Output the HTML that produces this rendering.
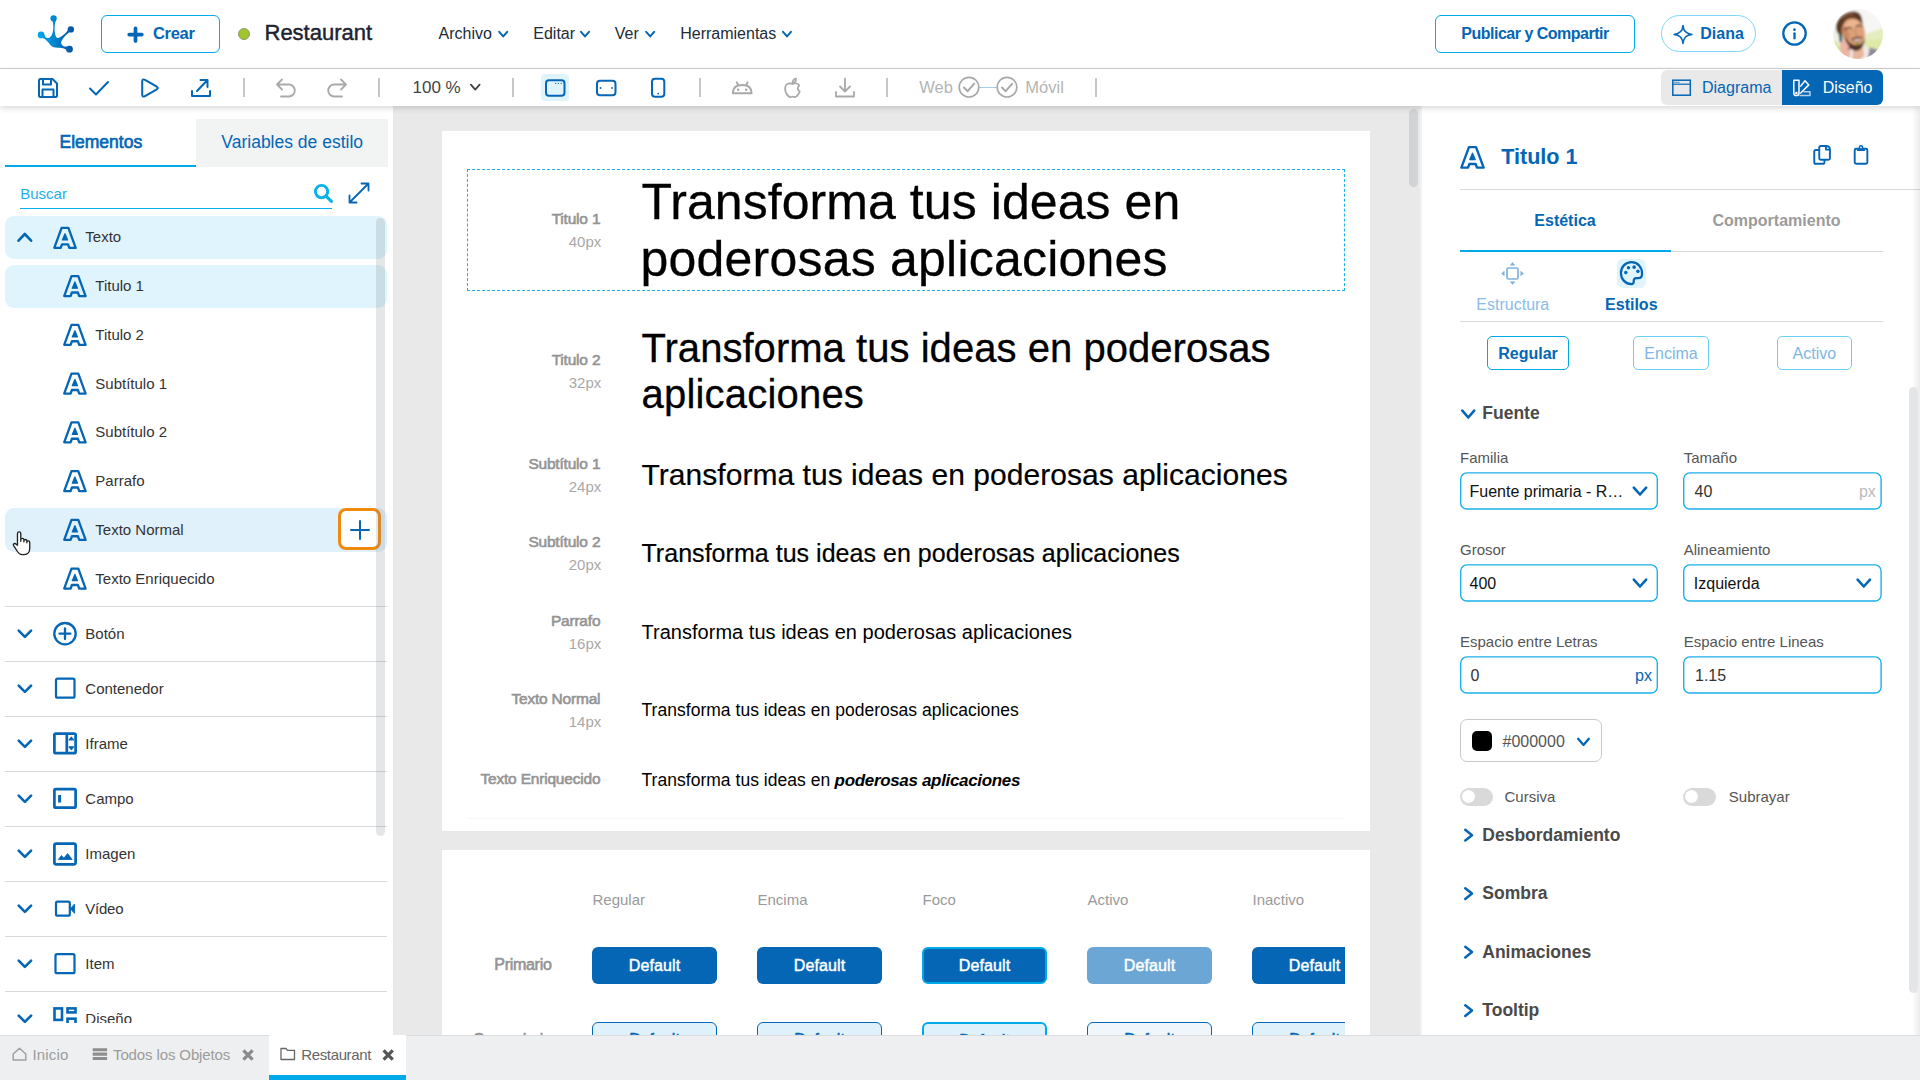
<!DOCTYPE html>
<html lang="es"><head><meta charset="utf-8"><title>Restaurant</title>
<style>
*{box-sizing:border-box;margin:0;padding:0}
html,body{width:1920px;height:1080px;overflow:hidden;background:#fff}
body{font-family:"Liberation Sans",sans-serif;color:#333;font-size:15px}
#app{position:relative;width:1920px;height:1080px;overflow:hidden}
.ab{position:absolute}
.t{white-space:nowrap;line-height:1}
.b{font-weight:700}
.blue{color:#0466b5}
svg{display:block;overflow:visible}
.m{-webkit-text-stroke:0.45px currentColor}

</style></head>
<body>
<div id="app">
<div class="ab " style="left:393px;top:106px;width:1029px;height:929px;background:#e9e9e9"></div>
<div class="ab " style="left:1420px;top:106px;width:2px;height:929px;background:#f1f2f2"></div>
<div class="ab " style="left:442px;top:131px;width:928px;height:699.5px;background:#fff"></div>
<div class="ab " style="left:467px;top:818px;width:878px;height:1px;background:#f8f8f8"></div>
<div class="ab " style="left:467px;top:169px;width:878px;height:121.5px;border:1px dashed #1fb0ea"></div>
<div class="ab t m" style="right:1319.7px;top:211px;font-size:15.5px;color:#949494;-webkit-text-stroke-width:.6px;letter-spacing:-.2px">Titulo 1</div>
<div class="ab t " style="right:1318.7px;top:234px;font-size:15px;color:#a8a8a8">40px</div>
<div class="ab t m" style="right:1319.7px;top:352px;font-size:15.5px;color:#949494;-webkit-text-stroke-width:.6px;letter-spacing:-.2px">Titulo 2</div>
<div class="ab t " style="right:1318.7px;top:375px;font-size:15px;color:#a8a8a8">32px</div>
<div class="ab t m" style="right:1319.7px;top:456px;font-size:15.5px;color:#949494;-webkit-text-stroke-width:.6px;letter-spacing:-.2px">Subtítulo 1</div>
<div class="ab t " style="right:1318.7px;top:479px;font-size:15px;color:#a8a8a8">24px</div>
<div class="ab t m" style="right:1319.7px;top:534px;font-size:15.5px;color:#949494;-webkit-text-stroke-width:.6px;letter-spacing:-.2px">Subtítulo 2</div>
<div class="ab t " style="right:1318.7px;top:557px;font-size:15px;color:#a8a8a8">20px</div>
<div class="ab t m" style="right:1319.7px;top:613px;font-size:15.5px;color:#949494;-webkit-text-stroke-width:.6px;letter-spacing:-.2px">Parrafo</div>
<div class="ab t " style="right:1318.7px;top:636px;font-size:15px;color:#a8a8a8">16px</div>
<div class="ab t m" style="right:1319.7px;top:691px;font-size:15.5px;color:#949494;-webkit-text-stroke-width:.6px;letter-spacing:-.2px">Texto Normal</div>
<div class="ab t " style="right:1318.7px;top:714px;font-size:15px;color:#a8a8a8">14px</div>
<div class="ab t m" style="right:1319.7px;top:771px;font-size:15.5px;color:#949494;-webkit-text-stroke-width:.6px;letter-spacing:-.2px">Texto Enriquecido</div>
<div class="ab t " style="left:641.5px;top:177px;font-size:50px;color:#000;letter-spacing:0.065px;-webkit-text-stroke:0.3px #000">Transforma tus ideas en</div>
<div class="ab t " style="left:640.5px;top:234px;font-size:50px;color:#000;letter-spacing:.215px;-webkit-text-stroke:.3px #000">poderosas aplicaciones</div>
<div class="ab t " style="left:641.5px;top:328px;font-size:40px;color:#000;letter-spacing:0.04px;-webkit-text-stroke:0.3px #000">Transforma tus ideas en poderosas</div>
<div class="ab t " style="left:641.5px;top:374px;font-size:40px;color:#000;letter-spacing:0.2px;-webkit-text-stroke:0.3px #000">aplicaciones</div>
<div class="ab t " style="left:641.5px;top:460px;font-size:30px;color:#000;letter-spacing:0.045px;-webkit-text-stroke:0.2px #000">Transforma tus ideas en poderosas aplicaciones</div>
<div class="ab t " style="left:641.5px;top:541px;font-size:25px;color:#000;letter-spacing:0.03px;-webkit-text-stroke:0.2px #000">Transforma tus ideas en poderosas aplicaciones</div>
<div class="ab t " style="left:641.5px;top:622px;font-size:20px;color:#000;letter-spacing:0.024px">Transforma tus ideas en poderosas aplicaciones</div>
<div class="ab t " style="left:641.5px;top:702px;font-size:17.5px;color:#000;letter-spacing:0.03px">Transforma tus ideas en poderosas aplicaciones</div>
<div class="ab t " style="left:641.5px;top:772px;font-size:17.5px;color:#000;letter-spacing:0.03px">Transforma tus ideas en</div>
<div class="ab t " style="left:834.6px;top:772px;font-size:17px;color:#000;letter-spacing:-.33px"><b><i>poderosas aplicaciones</i></b></div>
<div class="ab" style="left:393px;top:840px;width:1027px;height:195px;overflow:hidden"><div class="ab" style="left:-393px;top:-840px;width:1920px;height:1080px"><div class="ab " style="left:442px;top:850px;width:928px;height:300px;background:#fff"></div>
<div class="ab t " style="left:592.5px;top:892px;font-size:15px;color:#9a9a9a">Regular</div>
<div class="ab t " style="left:757.5px;top:892px;font-size:15px;color:#9a9a9a">Encima</div>
<div class="ab t " style="left:922.5px;top:892px;font-size:15px;color:#9a9a9a">Foco</div>
<div class="ab t " style="left:1087.5px;top:892px;font-size:15px;color:#9a9a9a">Activo</div>
<div class="ab t " style="left:1252.5px;top:892px;font-size:15px;color:#9a9a9a">Inactivo</div>
<div class="ab t m" style="right:1368.5px;top:957px;font-size:16px;color:#949494;-webkit-text-stroke-width:.6px;letter-spacing:-.3px">Primario</div>
<div class="ab t m" style="right:1368.5px;top:1032px;font-size:16px;color:#949494;-webkit-text-stroke-width:.6px;letter-spacing:-.3px">Secundario</div>
<div class="ab" style="left:467px;top:160px;width:878px;height:900px;overflow:hidden"><div class="ab " style="left:125px;top:787px;width:125px;height:37px;background:#0466b5;border-radius:6px;"><div class="t m" style="color:#fff;font-size:16px;text-align:center;line-height:37px;letter-spacing:.1px">Default</div></div>
<div class="ab " style="left:125px;top:862px;width:125px;height:37px;background:#dff1fb;border:1.500px solid #0466b5;border-radius:6px;"><div class="t m" style="color:#0466b5;font-size:16px;text-align:center;line-height:34px">Default</div></div>
<div class="ab " style="left:290px;top:787px;width:125px;height:37px;background:#0466b5;border-radius:6px;"><div class="t m" style="color:#fff;font-size:16px;text-align:center;line-height:37px;letter-spacing:.1px">Default</div></div>
<div class="ab " style="left:290px;top:862px;width:125px;height:37px;background:#dff1fb;border:1.500px solid #0466b5;border-radius:6px;"><div class="t m" style="color:#0466b5;font-size:16px;text-align:center;line-height:34px">Default</div></div>
<div class="ab " style="left:455px;top:787px;width:125px;height:37px;background:#0466b5;border-radius:6px;border:2px solid #00a9e8;"><div class="t m" style="color:#fff;font-size:16px;text-align:center;line-height:33px;letter-spacing:.1px">Default</div></div>
<div class="ab " style="left:455px;top:862px;width:125px;height:37px;background:#dff1fb;border:2px solid #00a9e8;border-radius:6px;"><div class="t m" style="color:#0466b5;font-size:16px;text-align:center;line-height:33px">Default</div></div>
<div class="ab " style="left:620px;top:787px;width:125px;height:37px;background:#6ba6d4;border-radius:6px;"><div class="t m" style="color:#fff;font-size:16px;text-align:center;line-height:37px;letter-spacing:.1px">Default</div></div>
<div class="ab " style="left:620px;top:862px;width:125px;height:37px;background:#eff7fc;border:1.500px solid #0466b5;border-radius:6px;"><div class="t m" style="color:#0466b5;font-size:16px;text-align:center;line-height:34px">Default</div></div>
<div class="ab " style="left:785px;top:787px;width:125px;height:37px;background:#0466b5;border-radius:6px;"><div class="t m" style="color:#fff;font-size:16px;text-align:center;line-height:37px;letter-spacing:.1px">Default</div></div>
<div class="ab " style="left:785px;top:862px;width:125px;height:37px;background:#dff1fb;border:1.500px solid #0466b5;border-radius:6px;"><div class="t m" style="color:#0466b5;font-size:16px;text-align:center;line-height:34px">Default</div></div></div></div></div>
<div class="ab " style="left:1409px;top:108.5px;width:9.3px;height:78px;background:#d2d3d5;border-radius:5px"></div>
<div class="ab " style="left:0px;top:106px;width:393px;height:929px;background:#fff"></div>
<div class="ab " style="left:196px;top:119px;width:192px;height:48px;background:#f2f4f4"></div>
<div class="ab " style="left:5px;top:164.5px;width:191px;height:2.5px;background:#00a9e8"></div>
<div class="ab t m blue" style="left:100.8px;transform:translateX(-50%);top:134px;font-size:17.5px;-webkit-text-stroke-width:.65px">Elementos</div>
<div class="ab t blue" style="left:292.2px;transform:translateX(-50%);top:134px;font-size:17.5px;">Variables de estilo</div>
<div class="ab t " style="left:20.2px;top:186px;font-size:15px;color:#1fb0ea">Buscar</div>
<div class="ab " style="left:20px;top:207.9px;width:312px;height:1.1px;background:#08b0ec"></div>
<svg class="ab" style="left:314px;top:184px;" width="21" height="21" viewBox="0.0000 0.0000 21.0000 21.0000"  preserveAspectRatio="none"><circle cx="7.550" cy="7.550" r="6.150" fill="none" stroke="#08b0ec" stroke-width="2.900"/><path d="M12.300 12.300 L17.400 17.400" stroke="#08b0ec" stroke-width="3.100" stroke-linecap="round"/></svg>
<svg class="ab" style="left:348px;top:182px;" width="23" height="23" viewBox="0.0000 0.0000 23.0000 23.0000"  preserveAspectRatio="none"><path d="M2 20 L20 2 M13.500 1.500 H20.500 V8.500 M1.500 13.500 V20.500 H8.500" fill="none" stroke="#0466b5" stroke-width="1.800" stroke-linecap="round" stroke-linejoin="round"/></svg>
<div class="ab " style="left:5px;top:216px;width:382px;height:43px;background:#dff4fc;border-radius:9px"></div>
<svg class="ab" style="left:17px;top:232px;" width="17" height="11" viewBox="-0.2000 -0.7000 17.0000 11.0000"  preserveAspectRatio="none"><path d="M1.3 8 L7.6 1.3 L13.899999999999999 8" fill="none" stroke="#0466b5" stroke-width="2.6" stroke-linecap="round" stroke-linejoin="round"/></svg>
<svg class="ab" style="left:53px;top:226px;" width="25" height="24" viewBox="0.0000 -0.7000 25.0000 24.0000"  preserveAspectRatio="none"><path d="M8.600 1.150 H15.400 L22.700 21.150 H16.300 L15 17.600 H9 L7.700 21.150 H1.300 Z" fill="none" stroke="#0466b5" stroke-width="2.300" stroke-linejoin="round"/><path d="M12 7 L14.600 13.300 H9.400 Z" fill="#0466b5" stroke="#0466b5" stroke-width="1.200" stroke-linejoin="round"/></svg>
<div class="ab t " style="left:85.3px;top:229px;font-size:15px;color:#333">Texto</div>
<div class="ab " style="left:5px;top:264.5px;width:382px;height:43.5px;background:#dff4fc;border-radius:9px"></div>
<svg class="ab" style="left:62px;top:274px;" width="26" height="25" viewBox="-0.9000 -0.9000 26.0000 25.0000"  preserveAspectRatio="none"><path d="M8.600 1.150 H15.400 L22.700 21.150 H16.300 L15 17.600 H9 L7.700 21.150 H1.300 Z" fill="none" stroke="#0466b5" stroke-width="2.300" stroke-linejoin="round"/><path d="M12 7 L14.600 13.300 H9.400 Z" fill="#0466b5" stroke="#0466b5" stroke-width="1.200" stroke-linejoin="round"/></svg>
<div class="ab t " style="left:95.3px;top:278px;font-size:15px;color:#333">Titulo 1</div>
<svg class="ab" style="left:62px;top:323px;" width="26" height="24" viewBox="-0.9000 -0.6500 26.0000 24.0000"  preserveAspectRatio="none"><path d="M8.600 1.150 H15.400 L22.700 21.150 H16.300 L15 17.600 H9 L7.700 21.150 H1.300 Z" fill="none" stroke="#0466b5" stroke-width="2.300" stroke-linejoin="round"/><path d="M12 7 L14.600 13.300 H9.400 Z" fill="#0466b5" stroke="#0466b5" stroke-width="1.200" stroke-linejoin="round"/></svg>
<div class="ab t " style="left:95.3px;top:327px;font-size:15px;color:#333">Titulo 2</div>
<svg class="ab" style="left:62px;top:372px;" width="26" height="24" viewBox="-0.9000 -0.4000 26.0000 24.0000"  preserveAspectRatio="none"><path d="M8.600 1.150 H15.400 L22.700 21.150 H16.300 L15 17.600 H9 L7.700 21.150 H1.300 Z" fill="none" stroke="#0466b5" stroke-width="2.300" stroke-linejoin="round"/><path d="M12 7 L14.600 13.300 H9.400 Z" fill="#0466b5" stroke="#0466b5" stroke-width="1.200" stroke-linejoin="round"/></svg>
<div class="ab t " style="left:95.3px;top:376px;font-size:15px;color:#333">Subtítulo 1</div>
<svg class="ab" style="left:62px;top:421px;" width="26" height="24" viewBox="-0.9000 -0.1500 26.0000 24.0000"  preserveAspectRatio="none"><path d="M8.600 1.150 H15.400 L22.700 21.150 H16.300 L15 17.600 H9 L7.700 21.150 H1.300 Z" fill="none" stroke="#0466b5" stroke-width="2.300" stroke-linejoin="round"/><path d="M12 7 L14.600 13.300 H9.400 Z" fill="#0466b5" stroke="#0466b5" stroke-width="1.200" stroke-linejoin="round"/></svg>
<div class="ab t " style="left:95.3px;top:424px;font-size:15px;color:#333">Subtítulo 2</div>
<svg class="ab" style="left:62px;top:469px;" width="26" height="25" viewBox="-0.9000 -0.9000 26.0000 25.0000"  preserveAspectRatio="none"><path d="M8.600 1.150 H15.400 L22.700 21.150 H16.300 L15 17.600 H9 L7.700 21.150 H1.300 Z" fill="none" stroke="#0466b5" stroke-width="2.300" stroke-linejoin="round"/><path d="M12 7 L14.600 13.300 H9.400 Z" fill="#0466b5" stroke="#0466b5" stroke-width="1.200" stroke-linejoin="round"/></svg>
<div class="ab t " style="left:95.3px;top:473px;font-size:15px;color:#333">Parrafo</div>
<div class="ab " style="left:5px;top:508px;width:382px;height:44px;background:#e0f1fb;border-radius:9px"></div>
<svg class="ab" style="left:62px;top:518px;" width="26" height="24" viewBox="-0.9000 -0.6500 26.0000 24.0000"  preserveAspectRatio="none"><path d="M8.600 1.150 H15.400 L22.700 21.150 H16.300 L15 17.600 H9 L7.700 21.150 H1.300 Z" fill="none" stroke="#0466b5" stroke-width="2.300" stroke-linejoin="round"/><path d="M12 7 L14.600 13.300 H9.400 Z" fill="#0466b5" stroke="#0466b5" stroke-width="1.200" stroke-linejoin="round"/></svg>
<div class="ab t " style="left:95.3px;top:522px;font-size:15px;color:#333">Texto Normal</div>
<svg class="ab" style="left:62px;top:567px;" width="26" height="24" viewBox="-0.9000 -0.4000 26.0000 24.0000"  preserveAspectRatio="none"><path d="M8.600 1.150 H15.400 L22.700 21.150 H16.300 L15 17.600 H9 L7.700 21.150 H1.300 Z" fill="none" stroke="#0466b5" stroke-width="2.300" stroke-linejoin="round"/><path d="M12 7 L14.600 13.300 H9.400 Z" fill="#0466b5" stroke="#0466b5" stroke-width="1.200" stroke-linejoin="round"/></svg>
<div class="ab t " style="left:95.3px;top:571px;font-size:15px;color:#333">Texto Enriquecido</div>
<div class="ab " style="left:338.3px;top:508.3px;width:43px;height:41.4px;border:3.500px solid #f08a0c;border-radius:8px;background:#fff"></div>
<svg class="ab" style="left:350px;top:520px;" width="21" height="21" viewBox="0.0000 0.0000 21.0000 21.0000"  preserveAspectRatio="none"><path d="M10 1 V19 M1 10 H19" stroke="#0466b5" stroke-width="2" stroke-linecap="round"/></svg>
<div class="ab " style="left:5px;top:606px;width:382px;height:1px;background:#d9d9d9"></div>
<div class="ab" style="left:0;top:607px;width:393px;height:416px;overflow:hidden"><div class="ab" style="left:0;top:-607px;width:1920px;height:1080px"><svg class="ab" style="left:17px;top:629px;" width="17" height="10" viewBox="-0.4000 -0.3000 17.0000 10.0000"  preserveAspectRatio="none"><path d="M1.3 1.3 L7.5 7.6 L13.7 1.3" fill="none" stroke="#0466b5" stroke-width="2.6" stroke-linecap="round" stroke-linejoin="round"/></svg>
<svg class="ab" style="left:53px;top:621px;" width="25" height="26" viewBox="0.0000 -0.7000 25.0000 26.0000"  preserveAspectRatio="none"><circle cx="12" cy="12" r="10.700" fill="none" stroke="#0466b5" stroke-width="2.300"/><path d="M12 6.600 V17.400 M6.600 12 H17.400" fill="none" stroke="#0466b5" stroke-width="2.300" stroke-linecap="round"/></svg>
<div class="ab t " style="left:85.3px;top:626px;font-size:15px;color:#333">Botón</div>
<div class="ab " style="left:5px;top:661px;width:382px;height:1px;background:#d9d9d9"></div>
<svg class="ab" style="left:17px;top:684px;" width="17" height="10" viewBox="-0.4000 -0.3000 17.0000 10.0000"  preserveAspectRatio="none"><path d="M1.3 1.3 L7.5 7.6 L13.7 1.3" fill="none" stroke="#0466b5" stroke-width="2.6" stroke-linecap="round" stroke-linejoin="round"/></svg>
<svg class="ab" style="left:53px;top:676px;" width="25" height="26" viewBox="0.0000 -0.7000 25.0000 26.0000"  preserveAspectRatio="none"><rect x="3" y="2" width="18.500" height="19" rx="1.500" fill="none" stroke="#0466b5" stroke-width="2.200"/></svg>
<div class="ab t " style="left:85.3px;top:681px;font-size:15px;color:#333">Contenedor</div>
<div class="ab " style="left:5px;top:716px;width:382px;height:1px;background:#d9d9d9"></div>
<svg class="ab" style="left:17px;top:739px;" width="17" height="10" viewBox="-0.4000 -0.3000 17.0000 10.0000"  preserveAspectRatio="none"><path d="M1.3 1.3 L7.5 7.6 L13.7 1.3" fill="none" stroke="#0466b5" stroke-width="2.6" stroke-linecap="round" stroke-linejoin="round"/></svg>
<svg class="ab" style="left:53px;top:731px;" width="25" height="26" viewBox="0.0000 -0.7000 25.0000 26.0000"  preserveAspectRatio="none"><rect x="1.400" y="1.900" width="21.200" height="19.600" rx="1.500" fill="none" stroke="#0466b5" stroke-width="2.700"/><path d="M13.800 2 V21.500" fill="none" stroke="#0466b5" stroke-width="2.700"/><path d="M16 8.300 L18.300 5.500 L20.600 8.300Z M16 15.100 L18.300 17.900 L20.600 15.100Z" fill="#0466b5" stroke="#0466b5" stroke-width="1.100" stroke-linejoin="round"/></svg>
<div class="ab t " style="left:85.3px;top:736px;font-size:15px;color:#333">Iframe</div>
<div class="ab " style="left:5px;top:771px;width:382px;height:1px;background:#d9d9d9"></div>
<svg class="ab" style="left:17px;top:794px;" width="17" height="10" viewBox="-0.4000 -0.3000 17.0000 10.0000"  preserveAspectRatio="none"><path d="M1.3 1.3 L7.5 7.6 L13.7 1.3" fill="none" stroke="#0466b5" stroke-width="2.6" stroke-linecap="round" stroke-linejoin="round"/></svg>
<svg class="ab" style="left:53px;top:786px;" width="25" height="26" viewBox="0.0000 -0.7000 25.0000 26.0000"  preserveAspectRatio="none"><rect x="1.400" y="2.400" width="21.200" height="18.600" rx="1.500" fill="none" stroke="#0466b5" stroke-width="2.700"/><path d="M6.600 8.300 V15.800" fill="none" stroke="#0466b5" stroke-width="3" stroke-linecap="butt"/></svg>
<div class="ab t " style="left:85.3px;top:791px;font-size:15px;color:#333">Campo</div>
<div class="ab " style="left:5px;top:826px;width:382px;height:1px;background:#d9d9d9"></div>
<svg class="ab" style="left:17px;top:849px;" width="17" height="10" viewBox="-0.4000 -0.3000 17.0000 10.0000"  preserveAspectRatio="none"><path d="M1.3 1.3 L7.5 7.6 L13.7 1.3" fill="none" stroke="#0466b5" stroke-width="2.6" stroke-linecap="round" stroke-linejoin="round"/></svg>
<svg class="ab" style="left:53px;top:842px;" width="25" height="26" viewBox="0.0000 -0.2000 25.0000 26.0000"  preserveAspectRatio="none"><rect x="1.400" y="1.400" width="21.200" height="20.800" rx="1.800" fill="none" stroke="#0466b5" stroke-width="2.700"/><path d="M5.300 17.300 L8.500 13.300 L10.800 16 L14.600 11.400 L19.200 17.300Z" fill="#0466b5" stroke="#0466b5" stroke-width=".8" stroke-linejoin="round"/></svg>
<div class="ab t " style="left:85.3px;top:846px;font-size:15px;color:#333">Imagen</div>
<div class="ab " style="left:5px;top:881px;width:382px;height:1px;background:#d9d9d9"></div>
<svg class="ab" style="left:17px;top:904px;" width="17" height="10" viewBox="-0.4000 -0.3000 17.0000 10.0000"  preserveAspectRatio="none"><path d="M1.3 1.3 L7.5 7.6 L13.7 1.3" fill="none" stroke="#0466b5" stroke-width="2.6" stroke-linecap="round" stroke-linejoin="round"/></svg>
<svg class="ab" style="left:53px;top:896px;" width="25" height="26" viewBox="0.0000 -0.7000 25.0000 26.0000"  preserveAspectRatio="none"><rect x="3" y="5" width="13.800" height="14" rx="1.500" fill="none" stroke="#0466b5" stroke-width="2.200"/><path d="M17.300 12 L21.600 7.300 V16.700Z" fill="#0466b5" stroke="#0466b5" stroke-width=".8" stroke-linejoin="round"/></svg>
<div class="ab t " style="left:85.3px;top:901px;font-size:15px;color:#333;letter-spacing:-.25px">Vídeo</div>
<div class="ab " style="left:5px;top:936px;width:382px;height:1px;background:#d9d9d9"></div>
<svg class="ab" style="left:17px;top:959px;" width="17" height="10" viewBox="-0.4000 -0.3000 17.0000 10.0000"  preserveAspectRatio="none"><path d="M1.3 1.3 L7.5 7.6 L13.7 1.3" fill="none" stroke="#0466b5" stroke-width="2.6" stroke-linecap="round" stroke-linejoin="round"/></svg>
<svg class="ab" style="left:53px;top:951px;" width="25" height="26" viewBox="0.0000 -0.7000 25.0000 26.0000"  preserveAspectRatio="none"><rect x="2.500" y="2.500" width="19" height="19" rx="1.500" fill="none" stroke="#0466b5" stroke-width="2.200"/></svg>
<div class="ab t " style="left:85.3px;top:956px;font-size:15px;color:#333">Item</div>
<div class="ab " style="left:5px;top:991px;width:382px;height:1px;background:#d9d9d9"></div>
<svg class="ab" style="left:17px;top:1014px;" width="17" height="10" viewBox="-0.4000 -0.3000 17.0000 10.0000"  preserveAspectRatio="none"><path d="M1.3 1.3 L7.5 7.6 L13.7 1.3" fill="none" stroke="#0466b5" stroke-width="2.6" stroke-linecap="round" stroke-linejoin="round"/></svg>
<svg class="ab" style="left:53px;top:1006px;" width="25" height="26" viewBox="0.0000 -0.7000 25.0000 26.0000"  preserveAspectRatio="none"><rect x="1.500" y="1.700" width="7.500" height="11.500" fill="none" stroke="#0466b5" stroke-width="2.600" stroke-linejoin="miter"/><rect x="14.500" y="1.700" width="8" height="4" fill="none" stroke="#0466b5" stroke-width="2.600" stroke-linejoin="miter"/><rect x="14.500" y="12" width="8" height="9" fill="none" stroke="#0466b5" stroke-width="2.600" stroke-linejoin="miter"/><rect x="1.500" y="19" width="7.500" height="4" fill="none" stroke="#0466b5" stroke-width="2.600" stroke-linejoin="miter"/></svg>
<div class="ab t " style="left:85.3px;top:1011px;font-size:15px;color:#333">Diseño</div></div></div>
<div class="ab " style="left:376.3px;top:218px;width:8.7px;height:618px;background:rgba(120,128,140,.2);border-radius:5px"></div>
<svg class="ab" style="left:11px;top:530px;" width="23" height="28" viewBox="-0.3619 -0.2717 20.8095 25.3585"  preserveAspectRatio="none"><path d="M5.500 13.500 V3 Q5.500 1.500 7 1.500 Q8.500 1.500 8.500 3 V10 V8.500 Q8.500 7.300 10 7.300 Q11.300 7.300 11.300 8.800 V10.500 V9.500 Q11.300 8.300 12.700 8.300 Q14 8.300 14 9.800 V11.300 V10.600 Q14 9.500 15.300 9.500 Q16.600 9.500 16.600 11 V16 Q16.600 22 11.500 22 H10 Q7 22 5 18.500 L2 13.800 Q1.300 12.500 2.500 12 Q3.600 11.700 4.500 12.800Z" fill="#fff" stroke="#222" stroke-width="1.200" stroke-linejoin="round"/></svg>
<div class="ab " style="left:1422px;top:106px;width:498px;height:929px;background:#fff"></div>
<svg class="ab" style="left:1460px;top:146px;" width="26" height="24" viewBox="0.0000 0.0000 24.9600 23.4737"  preserveAspectRatio="none"><path d="M8.600 1.150 H15.400 L22.700 21.150 H16.300 L15 17.600 H9 L7.700 21.150 H1.300 Z" fill="none" stroke="#0466b5" stroke-width="2.300" stroke-linejoin="round"/><path d="M12 7 L14.600 13.300 H9.400 Z" fill="#0466b5" stroke="#0466b5" stroke-width="1.200" stroke-linejoin="round"/></svg>
<div class="ab t b blue" style="left:1501.2px;top:146px;font-size:21.6px;">Titulo 1</div>
<svg class="ab" style="left:1812px;top:145px;" width="21" height="21" viewBox="0.0000 0.0000 21.0000 21.0000"  preserveAspectRatio="none"><rect x="2.250" y="4.950" width="10.200" height="13.800" rx="1.600" fill="none" stroke="#0466b5" stroke-width="1.900" stroke-linejoin="round" stroke-linecap="round"/><path d="M8.750 1 H14.300 Q17.900 1 17.900 4.600 V13.300 Q17.900 14.800 16.400 14.800 H8.750 Q7.250 14.800 7.250 13.300 V2.500 Q7.250 1 8.750 1Z" fill="#fff" stroke="#0466b5" stroke-width="1.900" stroke-linejoin="round"/><path d="M13.900 1.200 V4.600 H17.700" fill="none" stroke="#0466b5" stroke-width="1.900" stroke-linejoin="round" stroke-linecap="round"/></svg>
<svg class="ab" style="left:1852px;top:145px;" width="19" height="21" viewBox="0.0000 0.0000 19.0000 21.0000"  preserveAspectRatio="none"><rect x="2.700" y="3.750" width="12.650" height="15" rx="1.400" fill="none" stroke="#0466b5" stroke-width="1.900" stroke-linejoin="round" stroke-linecap="round"/><circle cx="9" cy="2.400" r="1.600" fill="#fff" stroke="#0466b5" stroke-width="1.500"/><path d="M5.600 5.100 H12.400" stroke="#0466b5" stroke-width="1.700" stroke-linecap="round"/></svg>
<div class="ab " style="left:1460px;top:189px;width:460px;height:1px;background:#d9d9d9"></div>
<div class="ab t b blue" style="left:1565px;transform:translateX(-50%);top:213px;font-size:16px;">Estética</div>
<div class="ab t b" style="left:1776.5px;transform:translateX(-50%);top:213px;font-size:16px;color:#9b9b9b">Comportamiento</div>
<div class="ab " style="left:1671px;top:251px;width:212px;height:1px;background:#d9d9d9"></div>
<div class="ab " style="left:1460px;top:249.5px;width:211px;height:2.6px;background:#00a9e8"></div>
<svg class="ab" style="left:1500px;top:261px;" width="26" height="26" viewBox="0.0000 0.0000 26.0000 26.0000"  preserveAspectRatio="none"><rect x="7" y="7" width="11" height="11" rx="1.500" fill="none" stroke="#7fb2e0" stroke-width="1.700"/><path d="M10.300 4.200 L12.500 1.500 L14.700 4.200Z M10.300 20.800 L12.500 23.500 L14.700 20.800Z M4.200 10.300 L1.500 12.500 L4.200 14.700Z M20.800 10.300 L23.500 12.500 L20.800 14.700Z" fill="#7fb2e0" stroke="#7fb2e0" stroke-width=".6" stroke-linejoin="round"/></svg>
<div class="ab t " style="left:1512.8px;transform:translateX(-50%);top:297px;font-size:16px;color:#8cbce6">Estructura</div>
<div class="ab " style="left:1617px;top:259.2px;width:29px;height:28.5px;background:#dff4fc;border-radius:6px"></div>
<svg class="ab" style="left:1619px;top:260px;" width="26" height="27" viewBox="-0.2951 -0.4743 25.5738 25.6126" preserveAspectRatio="none"><path d="M12 1.600 C5.800 1.600 1.600 6.200 1.600 11.800 C1.600 17.800 6.200 22.400 11.800 22.400 C13.600 22.400 14.400 21.200 14.200 19.900 C13.900 18.300 14.800 16.800 16.600 16.800 H18.600 C20.900 16.800 22.400 15.200 22.400 12.600 C22.400 6.400 18.200 1.600 12 1.600Z" fill="none" stroke="#0466b5" stroke-width="2.200"/><circle cx="6.400" cy="11.500" r="1.700" fill="#0466b5"/><circle cx="9" cy="6.800" r="1.700" fill="#0466b5"/><circle cx="14.600" cy="6.300" r="1.700" fill="#0466b5"/><circle cx="18.300" cy="10.300" r="1.700" fill="#0466b5"/></svg>
<div class="ab t b blue" style="left:1631.3px;transform:translateX(-50%);top:297px;font-size:16px;">Estilos</div>
<div class="ab " style="left:1460px;top:321px;width:423px;height:1px;background:#d9d9d9"></div>
<div class="ab " style="left:1487px;top:336.2px;width:82px;height:34px;border:1.300px solid #00a9e8;border-radius:5px"></div>
<div class="ab t b blue" style="left:1528px;transform:translateX(-50%);top:346px;font-size:16px;">Regular</div>
<div class="ab " style="left:1633px;top:336.2px;width:76px;height:34px;border:1.300px solid #6ccef4;border-radius:5px"></div>
<div class="ab t " style="left:1671px;transform:translateX(-50%);top:346px;font-size:16px;color:#7fb6e2">Encima</div>
<div class="ab " style="left:1777px;top:336.2px;width:75px;height:34px;border:1.300px solid #6ccef4;border-radius:5px"></div>
<div class="ab t " style="left:1814.3px;transform:translateX(-50%);top:346px;font-size:16px;color:#7fb6e2">Activo</div>
<svg class="ab" style="left:1461px;top:409px;" width="16" height="11" viewBox="0.0000 -0.3000 16.0000 11.0000"  preserveAspectRatio="none"><path d="M1.3 1.3 L7.25 8.2 L13.2 1.3" fill="none" stroke="#0466b5" stroke-width="2.6" stroke-linecap="round" stroke-linejoin="round"/></svg>
<div class="ab t b" style="left:1482.3px;top:405px;font-size:17.5px;color:#4a4a4a">Fuente</div>
<div class="ab t " style="left:1460px;top:450px;font-size:15px;color:#555">Familia</div>
<div class="ab t " style="left:1683.7px;top:450px;font-size:15px;color:#555">Tamaño</div>
<svg class="ab" style="left:1460px;top:472px;" width="199" height="40" viewBox="0.0000 -0.5000 199.0000 40.0000"  preserveAspectRatio="none"><rect x=".7" y=".4" width="196.6" height="36.100" rx="6" fill="#fff" stroke="#1db0ea" stroke-width="1.400"/></svg>
<div class="ab t " style="left:1469.5px;top:484px;font-size:16px;color:#111">Fuente primaria - R…</div>
<svg class="ab" style="left:1632px;top:486px;" width="17" height="11" viewBox="-0.5000 -0.3000 17.0000 11.0000"  preserveAspectRatio="none"><path d="M1.3 1.3 L7.5 8.2 L13.7 1.3" fill="none" stroke="#0466b5" stroke-width="2.6" stroke-linecap="round" stroke-linejoin="round"/></svg>
<svg class="ab" style="left:1683px;top:472px;" width="200" height="40" viewBox="0.0000 -0.5000 200.0000 40.0000"  preserveAspectRatio="none"><rect x=".7" y=".4" width="197.4" height="36.100" rx="6" fill="#fff" stroke="#1db0ea" stroke-width="1.400"/></svg>
<div class="ab t " style="left:1694.5px;top:484px;font-size:16px;color:#333">40</div>
<div class="ab t " style="right:44.200000000000045px;top:484px;font-size:16px;color:#bbb">px</div>
<div class="ab t " style="left:1460px;top:542px;font-size:15px;color:#555">Grosor</div>
<div class="ab t " style="left:1683.7px;top:542px;font-size:15px;color:#555">Alineamiento</div>
<svg class="ab" style="left:1460px;top:564px;" width="199" height="40" viewBox="0.0000 -0.5000 199.0000 40.0000"  preserveAspectRatio="none"><rect x=".7" y=".4" width="196.6" height="36.100" rx="6" fill="#fff" stroke="#1db0ea" stroke-width="1.400"/></svg>
<div class="ab t " style="left:1469.5px;top:576px;font-size:16px;color:#111">400</div>
<svg class="ab" style="left:1632px;top:578px;" width="17" height="11" viewBox="-0.5000 -0.3000 17.0000 11.0000"  preserveAspectRatio="none"><path d="M1.3 1.3 L7.5 8.2 L13.7 1.3" fill="none" stroke="#0466b5" stroke-width="2.6" stroke-linecap="round" stroke-linejoin="round"/></svg>
<svg class="ab" style="left:1683px;top:564px;" width="200" height="40" viewBox="0.0000 -0.5000 200.0000 40.0000"  preserveAspectRatio="none"><rect x=".7" y=".4" width="197.4" height="36.100" rx="6" fill="#fff" stroke="#1db0ea" stroke-width="1.400"/></svg>
<div class="ab t " style="left:1693.8px;top:576px;font-size:16px;color:#111">Izquierda</div>
<svg class="ab" style="left:1856px;top:578px;" width="17" height="11" viewBox="-0.3000 -0.3000 17.0000 11.0000"  preserveAspectRatio="none"><path d="M1.3 1.3 L7.5 8.2 L13.7 1.3" fill="none" stroke="#0466b5" stroke-width="2.6" stroke-linecap="round" stroke-linejoin="round"/></svg>
<div class="ab t " style="left:1460px;top:634px;font-size:15px;color:#555">Espacio entre Letras</div>
<div class="ab t " style="left:1683.7px;top:634px;font-size:15px;color:#555">Espacio entre Lineas</div>
<svg class="ab" style="left:1460px;top:656px;" width="199" height="40" viewBox="0.0000 -0.5000 199.0000 40.0000"  preserveAspectRatio="none"><rect x=".7" y=".4" width="196.6" height="36.100" rx="6" fill="#fff" stroke="#1db0ea" stroke-width="1.400"/></svg>
<div class="ab t " style="left:1470.5px;top:668px;font-size:16px;color:#333">0</div>
<div class="ab t " style="right:268px;top:668px;font-size:16px;color:#0466b5">px</div>
<svg class="ab" style="left:1683px;top:656px;" width="200" height="40" viewBox="0.0000 -0.5000 200.0000 40.0000"  preserveAspectRatio="none"><rect x=".7" y=".4" width="197.4" height="36.100" rx="6" fill="#fff" stroke="#1db0ea" stroke-width="1.400"/></svg>
<div class="ab t " style="left:1695px;top:668px;font-size:16px;color:#333">1.15</div>
<div class="ab " style="left:1460px;top:719.3px;width:142px;height:43.2px;border:1px solid #c9c9c9;border-radius:7px"></div>
<div class="ab " style="left:1472px;top:730.8px;width:20px;height:20px;background:#000;border-radius:5px"></div>
<div class="ab t " style="left:1502.5px;top:734px;font-size:16px;color:#555">#000000</div>
<svg class="ab" style="left:1577px;top:737px;" width="14" height="11" viewBox="0.0000 -0.6000 14.0000 11.0000"  preserveAspectRatio="none"><path d="M1.15 1.15 L6.5 7.4 L11.85 1.15" fill="none" stroke="#0466b5" stroke-width="2.3" stroke-linecap="round" stroke-linejoin="round"/></svg>
<div class="ab " style="left:1460px;top:788px;width:32.5px;height:17.8px;background:#d9d9d9;border-radius:9px"><div class="ab" style="left:2px;top:2.400px;width:13px;height:13px;border-radius:50%;background:#fff"></div></div>
<div class="ab t " style="left:1504.5px;top:789px;font-size:15px;color:#555">Cursiva</div>
<div class="ab " style="left:1683.3px;top:788px;width:32.5px;height:17.8px;background:#d9d9d9;border-radius:9px"><div class="ab" style="left:2px;top:2.400px;width:13px;height:13px;border-radius:50%;background:#fff"></div></div>
<div class="ab t " style="left:1728.8px;top:789px;font-size:15px;color:#555">Subrayar</div>
<svg class="ab" style="left:1464px;top:828px;" width="10" height="15" viewBox="0.0000 -0.6000 10.0000 15.0000"  preserveAspectRatio="none"><path d="M1.25 1.25 L8 6.6 L1.25 11.95" fill="none" stroke="#0466b5" stroke-width="2.5" stroke-linecap="round" stroke-linejoin="round"/></svg>
<div class="ab t b" style="left:1482.3px;top:827px;font-size:17.5px;color:#4a4a4a">Desbordamiento</div>
<svg class="ab" style="left:1464px;top:887px;" width="10" height="15" viewBox="0.0000 0.0000 10.0000 15.0000"  preserveAspectRatio="none"><path d="M1.25 1.25 L8 6.6 L1.25 11.95" fill="none" stroke="#0466b5" stroke-width="2.5" stroke-linecap="round" stroke-linejoin="round"/></svg>
<div class="ab t b" style="left:1482.3px;top:885px;font-size:17.5px;color:#4a4a4a">Sombra</div>
<svg class="ab" style="left:1464px;top:945px;" width="10" height="15" viewBox="0.0000 -0.5000 10.0000 15.0000"  preserveAspectRatio="none"><path d="M1.25 1.25 L8 6.6 L1.25 11.95" fill="none" stroke="#0466b5" stroke-width="2.5" stroke-linecap="round" stroke-linejoin="round"/></svg>
<div class="ab t b" style="left:1482.3px;top:944px;font-size:17.5px;color:#4a4a4a">Animaciones</div>
<svg class="ab" style="left:1464px;top:1004px;" width="10" height="15" viewBox="0.0000 0.0000 10.0000 15.0000"  preserveAspectRatio="none"><path d="M1.25 1.25 L8 6.6 L1.25 11.95" fill="none" stroke="#0466b5" stroke-width="2.5" stroke-linecap="round" stroke-linejoin="round"/></svg>
<div class="ab t b" style="left:1482.3px;top:1002px;font-size:17.5px;color:#4a4a4a">Tooltip</div>
<div class="ab " style="left:1912px;top:106px;width:8px;height:929px;background:linear-gradient(90deg,rgba(0,0,0,0),rgba(0,0,0,.075))"></div>
<div class="ab " style="left:1909px;top:386.5px;width:9px;height:606.5px;background:#e4e5e7;border-radius:5px"></div>
<div class="ab " style="left:0px;top:0px;width:1920px;height:68px;background:#fff;border-bottom:1px solid #cdd1d5;height:69px"></div>
<div class="ab " style="left:0px;top:69px;width:1920px;height:37px;background:#fff;box-shadow:0 2px 6px rgba(0,0,0,.16)"></div>
<svg class="ab" style="left:0px;top:0px;filter:blur(.3px)" width="101" height="69" viewBox="0.0000 0.0000 101.0000 69.0000"  preserveAspectRatio="none"><defs><linearGradient id="lg" x1="160" y1="0" x2="920" y2="0" gradientUnits="userSpaceOnUse"><stop offset="0" stop-color="#00aaec"/><stop offset="0.45" stop-color="#0086cf"/><stop offset="1" stop-color="#06509f"/></linearGradient></defs><g transform="translate(30 8) scale(0.048123)" fill="url(#lg)"><path d="M470 270 C486 330 490 400 480 470 C470 545 440 605 395 622 C345 638 305 600 288 535 L235 560 L262 625 C330 640 380 720 430 775 C470 820 520 828 600 826 C680 824 730 840 765 885 L820 855 L775 800 C740 812 660 790 646 730 C640 680 720 575 805 512 L848 445 L785 462 C770 500 700 560 640 600 C600 630 560 632 538 590 C516 540 506 450 514 380 C518 320 525 290 542 262 L490 215 Z"/><circle cx="490" cy="215" r="66"/><circle cx="848" cy="445" r="66"/><circle cx="230" cy="560" r="70"/><circle cx="820" cy="855" r="71"/></g></svg>
<div class="ab " style="left:101px;top:15px;width:119px;height:38px;border:1px solid #00a9e8;border-radius:6px;background:#fff"></div>
<svg class="ab" style="left:127px;top:26px;" width="18" height="18" viewBox="0.0000 0.0000 18.0000 18.0000"  preserveAspectRatio="none"><path d="M8.500 2.300 V14.900 M2.200 8.600 H14.800" stroke="#0466b5" stroke-width="3.700" stroke-linecap="round"/></svg>
<div class="ab t b blue" style="left:153px;top:25px;font-size:16.5px;letter-spacing:-.3px">Crear</div>
<div class="ab " style="left:238px;top:28px;width:12px;height:12px;border-radius:50%;background:#9fc52f;border:1px solid #8d9a6c"></div>
<div class="ab t m" style="left:264.5px;top:22px;font-size:22px;color:#1d2330">Restaurant</div>
<div class="ab t " style="left:438.5px;top:26px;font-size:16px;color:#222b38">Archivo</div>
<svg class="ab" style="left:498px;top:30px;" width="12" height="9" viewBox="-0.2000 -0.8000 12.0000 9.0000"  preserveAspectRatio="none"><path d="M1.0 1.0 L5.0 5.6 L9.0 1.0" fill="none" stroke="#0466b5" stroke-width="2" stroke-linecap="round" stroke-linejoin="round"/></svg>
<div class="ab t " style="left:533.3px;top:26px;font-size:16px;color:#222b38">Editar</div>
<svg class="ab" style="left:580px;top:30px;" width="11" height="9" viewBox="0.0000 -0.8000 11.0000 9.0000"  preserveAspectRatio="none"><path d="M1.0 1.0 L5.0 5.6 L9.0 1.0" fill="none" stroke="#0466b5" stroke-width="2" stroke-linecap="round" stroke-linejoin="round"/></svg>
<div class="ab t " style="left:614.8px;top:26px;font-size:16px;color:#222b38">Ver</div>
<svg class="ab" style="left:645px;top:30px;" width="12" height="9" viewBox="-0.2000 -0.8000 12.0000 9.0000"  preserveAspectRatio="none"><path d="M1.0 1.0 L5.0 5.6 L9.0 1.0" fill="none" stroke="#0466b5" stroke-width="2" stroke-linecap="round" stroke-linejoin="round"/></svg>
<div class="ab t " style="left:680.2px;top:26px;font-size:16px;color:#222b38">Herramientas</div>
<svg class="ab" style="left:782px;top:30px;" width="11" height="9" viewBox="0.0000 -0.8000 11.0000 9.0000"  preserveAspectRatio="none"><path d="M1.0 1.0 L5.0 5.6 L9.0 1.0" fill="none" stroke="#0466b5" stroke-width="2" stroke-linecap="round" stroke-linejoin="round"/></svg>
<div class="ab " style="left:1435px;top:15px;width:200px;height:38px;border:1px solid #00a9e8;border-radius:6px;background:#fff"></div>
<div class="ab t b blue" style="left:1535px;transform:translateX(-50%);top:26px;font-size:16px;letter-spacing:-.5px">Publicar y Compartir</div>
<div class="ab " style="left:1661px;top:15px;width:95px;height:37px;border:1px solid #7fd6f7;border-radius:19px;background:#fff"></div>
<svg class="ab" style="left:1673px;top:24px;" width="21" height="22" viewBox="0.0000 -0.4000 21.0000 22.0000"  preserveAspectRatio="none"><path d="M10 1 C10.400 7 13 9.600 19 10 C13 10.400 10.400 13 10 19 C9.600 13 7 10.400 1 10 C7 9.600 9.600 7 10 1Z" fill="none" stroke="#0466b5" stroke-width="1.500" stroke-linejoin="round"/></svg>
<div class="ab t b blue" style="left:1700.3px;top:26px;font-size:16px;">Diana</div>
<svg class="ab" style="left:1782px;top:21px;" width="26" height="26" viewBox="0.0000 0.0000 26.0000 26.0000"  preserveAspectRatio="none"><circle cx="12.500" cy="12.500" r="11.200" fill="none" stroke="#0466b5" stroke-width="2.300"/><circle cx="12.500" cy="8.700" r="1.350" fill="#0466b5"/><path d="M12.500 12.300 V17.400" stroke="#0466b5" stroke-width="2.300" stroke-linecap="round"/></svg>
<svg class="ab" style="left:1833px;top:9px;" width="51" height="51" viewBox="0.0000 0.0000 51.0000 51.0000"  preserveAspectRatio="none"><defs><clipPath id="avc"><circle cx="25" cy="25" r="25"/></clipPath><filter id="avb" x="-10%" y="-10%" width="120%" height="120%"><feGaussianBlur stdDeviation=".8"/></filter></defs><g clip-path="url(#avc)"><g filter="url(#avb)"><rect x="-3" y="-3" width="56" height="56" fill="#f6f6f5"/><path d="M30 26 C36 24 44 20 53 19 V44 H30Z" fill="#e4edbf"/><path d="M32 33 C38 30 46 30 53 28 V46 H32Z" fill="#dfeaa8"/><path d="M-3 28 C2 30 6 34 8 40 L12 53 H-3Z" fill="#d9e6a6"/><path d="M-3 20 L6 24 L6 32 L-3 32Z" fill="#eef2e4"/><path d="M33 42 L37 38.500 C41 39.500 44 40.500 47 42 L40 53 H31Z" fill="#8a8d99"/><path d="M17 44 L22 38 L31 36 L36.500 39.500 L34 53 H16Z" fill="#f1e9e8"/><path d="M20 42 L30 38 L31 47 L25 53 H19Z" fill="#e6b59c"/><path d="M3 19 C3 11 9 5 16 3 C22 1.500 27 3 28.500 8 L30 15 L22 12 L10 16 L9 27 C5.500 25.500 3 22.500 3 19Z" fill="#5b3a23"/><ellipse cx="20.500" cy="23.500" rx="11.300" ry="14.500" transform="rotate(-14 20.500 23.500)" fill="#dda17a"/><ellipse cx="12.500" cy="25" rx="3.500" ry="8" transform="rotate(-14 12.500 25)" fill="#c98a64"/><ellipse cx="19" cy="15.500" rx="7" ry="4.500" transform="rotate(-14 19 15.500)" fill="#eab690"/><path d="M11.500 28 C13 34 16 40.500 21.500 41.800 C27 42.500 31.500 38 32 28.500 C30 34 27.500 36.300 24 36.300 C19.500 36.300 15.500 33.500 11.500 28Z" fill="#4b3122"/><path d="M18 29.800 C21 27.800 26.500 27 29.500 27.800 C28.500 31.500 25 33.500 21.500 33 C19.500 32.500 18.500 31.500 18 29.800Z" fill="#7a4a36"/><path d="M19.800 30.300 C22.500 30.800 26 30.200 28.500 28.800 C27.500 31.500 24.500 32.600 22 32.200 C20.800 31.900 20.100 31.200 19.800 30.300Z" fill="#f3dcd6"/><ellipse cx="24.600" cy="35" rx="2.300" ry="1.300" fill="#8a8a3a"/><path d="M11.500 20.500 C13.500 18.800 16.500 18.300 18.500 19 M23 17.500 C25 16.300 27.500 16 29.500 17" stroke="#6b4630" stroke-width="1.700" fill="none" stroke-linecap="round" opacity=".85"/><path d="M21.500 20 L23.500 26.500" stroke="#c98e6c" stroke-width="1.600" stroke-linecap="round"/><path d="M3 18.500 C3.500 12 8 6.500 15 3.500 C19.500 2 24.500 2.500 26.500 5 C28.500 8 29 11 29 13.500 C26 9.500 22.500 8 18.500 8.500 C13.500 9 9.500 11.500 8.500 16 C8 19.500 8.200 22.500 8 25 C5.500 23.500 3.200 21.500 3 18.500Z" fill="#5b3a23"/><path d="M9 9.500 C12 6.500 16.500 5 20 5.500" stroke="#8a5a34" stroke-width="1.600" fill="none" stroke-linecap="round"/><rect x="6.200" y="24" width="3" height="10.500" rx="1" transform="rotate(-8 7.700 29)" fill="#2f5a57"/><path d="M7 34 C8.500 31.500 11.500 31 13.500 33.500 C15.500 36 17.500 39.500 17.500 42.500 C17.500 46 16 50 14.500 53 H9 C8 47 6.500 40 7 34Z" fill="#ecb5a6"/><circle cx="16" cy="39.500" r="1.300" fill="#9b4a4a"/></g></g></svg>
<svg class="ab" style="left:38px;top:78px;" width="21" height="21" viewBox="0.0000 0.0000 21.0000 21.0000"  preserveAspectRatio="none"><path d="M2.500 1 H14.500 L19 5.500 V17.500 Q19 19 17.500 19 H2.500 Q1 19 1 17.500 V2.500 Q1 1 2.500 1Z M5 1 V6.500 H13 V1 M4.500 19 V11.500 H15.500 V19" fill="none" stroke="#0466b5" stroke-width="2" stroke-linejoin="round" stroke-linecap="round"/></svg>
<svg class="ab" style="left:88px;top:80px;" width="23" height="17" viewBox="0.0000 0.0000 23.0000 17.0000"  preserveAspectRatio="none"><path d="M2 8.500 L8 14.500 L20 2" fill="none" stroke="#0466b5" stroke-width="2" stroke-linejoin="round" stroke-linecap="round"/></svg>
<svg class="ab" style="left:140px;top:77px;" width="21" height="23" viewBox="0.0000 0.0000 21.0000 23.0000"  preserveAspectRatio="none"><path d="M2.200 4.600 Q2.200 1.300 5 2.900 L16.400 9.400 Q19.200 11 16.400 12.600 L5 19.100 Q2.200 20.700 2.200 17.400Z" fill="none" stroke="#0466b5" stroke-width="2" stroke-linejoin="round" stroke-linecap="round"/></svg>
<svg class="ab" style="left:190px;top:78px;" width="23" height="21" viewBox="0.0000 0.0000 23.0000 21.0000"  preserveAspectRatio="none"><path d="M2 13 V18 H20 V13 M7 13 L17 2.500 M10.500 2 H17.500 V9" fill="none" stroke="#0466b5" stroke-width="2" stroke-linejoin="round" stroke-linecap="round"/></svg>
<div class="ab " style="left:242.8px;top:77.5px;width:2px;height:19.5px;background:#c6c6c6;width:1.800px"></div>
<svg class="ab" style="left:275px;top:78px;" width="23" height="21" viewBox="0.0000 0.0000 23.0000 21.0000"  preserveAspectRatio="none"><path d="M7 1.500 L2 6.500 L7 11.500 M2.500 6.500 H13.800 A6 6 0 0 1 13.800 18.500 H6" fill="none" stroke="#a9a9a9" stroke-width="1.800" stroke-linejoin="round" stroke-linecap="round"/></svg>
<svg class="ab" style="left:326px;top:78px;" width="23" height="21" viewBox="0.0000 0.0000 23.0000 21.0000"  preserveAspectRatio="none"><path d="M15 1.500 L20 6.500 L15 11.500 M19.500 6.500 H8.200 A6 6 0 0 0 8.200 18.500 H16" fill="none" stroke="#a9a9a9" stroke-width="1.800" stroke-linejoin="round" stroke-linecap="round"/></svg>
<div class="ab " style="left:377.8px;top:77.5px;width:2px;height:19.5px;background:#c6c6c6;width:1.800px"></div>
<div class="ab t " style="left:412.5px;top:79px;font-size:17px;color:#444">100 %</div>
<svg class="ab" style="left:470px;top:83px;" width="12" height="9" viewBox="0.0000 -0.8000 12.0000 9.0000"  preserveAspectRatio="none"><path d="M0.9 0.9 L5.25 5.8 L9.6 0.9" fill="none" stroke="#444" stroke-width="1.8" stroke-linecap="round" stroke-linejoin="round"/></svg>
<div class="ab " style="left:511.8px;top:77.5px;width:2px;height:19.5px;background:#c6c6c6;width:1.800px"></div>
<div class="ab " style="left:541px;top:74px;width:28px;height:27px;background:#dff4fc;border-radius:4px"></div>
<svg class="ab" style="left:545px;top:79px;" width="22" height="20" viewBox="0.0000 -0.2000 22.0000 20.0000"  preserveAspectRatio="none"><rect x="1" y="1" width="18.500" height="15.500" rx="3" fill="none" stroke="#0466b5" stroke-width="2" stroke-linejoin="round" stroke-linecap="round"/><path d="M10 4.200 h1.200 M12.800 4.200 h1.200 M15.600 4.200 h1.200" stroke="#0466b5" stroke-width="1"/></svg>
<svg class="ab" style="left:596px;top:79px;" width="22" height="19" viewBox="0.0000 -0.8000 22.0000 19.0000"  preserveAspectRatio="none"><rect x="1" y="1" width="18.500" height="14.500" rx="3" fill="none" stroke="#0466b5" stroke-width="2" stroke-linejoin="round" stroke-linecap="round"/><circle cx="4.500" cy="8.200" r=".9" fill="#0466b5"/><circle cx="16" cy="8.200" r=".9" fill="#0466b5"/></svg>
<svg class="ab" style="left:651px;top:77px;" width="16" height="24" viewBox="0.0000 -0.8000 16.0000 24.0000"  preserveAspectRatio="none"><rect x="1" y="1" width="12.300" height="18" rx="3" fill="none" stroke="#0466b5" stroke-width="2" stroke-linejoin="round" stroke-linecap="round"/><circle cx="7.200" cy="15.800" r=".9" fill="#0466b5"/></svg>
<div class="ab " style="left:698.8px;top:77.5px;width:2px;height:19.5px;background:#c6c6c6;width:1.800px"></div>
<svg class="ab" style="left:731px;top:81px;" width="23" height="15" viewBox="0.0000 0.0000 23.0000 15.0000"  preserveAspectRatio="none"><path d="M1.800 12.300 Q1.800 3.900 11.200 3.900 Q20.600 3.900 20.600 12.300Z M5.800 1.400 L7.400 4.500 M16.600 1.400 L15 4.500" fill="none" stroke="#a9a9a9" stroke-width="2" stroke-linejoin="round" stroke-linecap="round"/><circle cx="7.200" cy="8.800" r="1.250" fill="#a9a9a9"/><circle cx="15.200" cy="8.800" r="1.250" fill="#a9a9a9"/></svg>
<svg class="ab" style="left:783px;top:77px;" width="21" height="23" viewBox="0.0000 0.0000 21.0000 23.0000"  preserveAspectRatio="none"><path d="M13.500 6.500 C11.500 5.500 10.500 7 9.500 7 C8.500 7 6.500 5.500 4.500 6.800 C1.500 8.500 1.500 13 3.500 16.500 C5 19.500 6.500 20.500 8 20 C9 19.600 10 19.600 11 20 C12.500 20.500 14 19.500 15.500 17 C16.200 15.800 16.500 15 16.700 14.300 C14.500 13.300 14 10 16.300 8.500 C15.500 7.200 14.500 6.800 13.500 6.500Z M9.500 6.500 C9.500 4 11 2 13 1.500 C13.300 3.500 12 5.500 9.500 6.500Z" fill="none" stroke="#a9a9a9" stroke-width="1.800" stroke-linejoin="round" stroke-linecap="round"/></svg>
<svg class="ab" style="left:834px;top:78px;" width="23" height="21" viewBox="0.0000 0.0000 23.0000 21.0000"  preserveAspectRatio="none"><path d="M2 14 V18.500 H20 V14 M11 .6 V13 M6 8.500 L11 13.500 L16 8.500" fill="none" stroke="#a9a9a9" stroke-width="1.800" stroke-linejoin="round" stroke-linecap="round"/></svg>
<div class="ab " style="left:885.8px;top:77.5px;width:2px;height:19.5px;background:#c6c6c6;width:1.800px"></div>
<div class="ab t " style="left:919.3px;top:79px;font-size:16.5px;color:#b4b4b4">Web</div>
<div class="ab " style="left:979px;top:86.8px;width:18px;height:1px;background:#a8cdea"></div>
<svg class="ab" style="left:958px;top:76px;" width="23" height="24" viewBox="0.0000 -0.2000 23.0000 24.0000"  preserveAspectRatio="none"><circle cx="11" cy="11" r="9.800" fill="none" stroke="#a9a9a9" stroke-width="1.700"/><path d="M6 11.300 L9.700 15 L16.200 7.500" fill="none" stroke="#a9a9a9" stroke-width="2" stroke-linecap="round" stroke-linejoin="round"/></svg>
<svg class="ab" style="left:996px;top:76px;" width="23" height="24" viewBox="0.0000 -0.2000 23.0000 24.0000"  preserveAspectRatio="none"><circle cx="11" cy="11" r="9.800" fill="none" stroke="#a9a9a9" stroke-width="1.700"/><path d="M6 11.300 L9.700 15 L16.200 7.500" fill="none" stroke="#a9a9a9" stroke-width="2" stroke-linecap="round" stroke-linejoin="round"/></svg>
<div class="ab t " style="left:1025.3px;top:79px;font-size:16.5px;color:#b4b4b4">Móvil</div>
<div class="ab " style="left:1094.8px;top:77.5px;width:2px;height:19.5px;background:#c6c6c6;width:1.800px"></div>
<div class="ab " style="left:1661px;top:70px;width:121px;height:35px;background:#e9e9e9;border-radius:6px 0 0 6px"></div>
<div class="ab " style="left:1782px;top:70px;width:101px;height:35px;background:#0466b5;border-radius:0 6px 6px 0"></div>
<svg class="ab" style="left:1672px;top:79px;" width="21" height="19" viewBox="0.0000 0.0000 21.0000 19.0000"  preserveAspectRatio="none"><rect x=".8" y="1.200" width="17.500" height="15" fill="none" stroke="#0466b5" stroke-width="1.500"/><path d="M.8 5.200 H18.300" stroke="#0466b5" stroke-width="1.200"/><path d="M2.400 3.300 h1.200 M4.300 3.300 h1.200 M6.200 3.300 h1.200" stroke="#0466b5" stroke-width="1"/></svg>
<div class="ab t " style="left:1702px;top:80px;font-size:16px;color:#0466b5">Diagrama</div>
<svg class="ab" style="left:1792px;top:78px;" width="21" height="21" viewBox="0.0000 0.0000 21.0000 21.0000"  preserveAspectRatio="none"><path d="M1.800 2.200 H7 V15 A2.600 2.600 0 0 1 1.800 15Z" fill="none" stroke="#fff" stroke-width="1.500" stroke-linejoin="round"/><circle cx="4.400" cy="15" r="1.250" fill="#fff"/><path d="M8.300 8.600 L13 2.800 L16.800 6.900 L8.300 15.500" fill="none" stroke="#fff" stroke-width="1.500" stroke-linejoin="round"/><path d="M7.500 17.400 H18 V13.700 H11.500" fill="none" stroke="#fff" stroke-opacity=".7" stroke-width="1.500" stroke-linejoin="round"/></svg>
<div class="ab t " style="left:1822.7px;top:80px;font-size:16px;color:#fff">Diseño</div>
<div class="ab " style="left:0px;top:1035px;width:1920px;height:45px;background:#eeeff0;border-top:1px solid #dcdddf"></div>
<svg class="ab" style="left:12px;top:1047px;" width="16" height="15" viewBox="0.0000 0.0000 16.0000 15.0000"  preserveAspectRatio="none"><path d="M1.200 7 L7.500 1.200 L13.800 7 V13 H1.200Z" fill="none" stroke="#a0a0a0" stroke-width="1.500" stroke-linejoin="round"/></svg>
<div class="ab t " style="left:32.5px;top:1047px;font-size:15px;color:#9c9c9c;letter-spacing:.17px">Inicio</div>
<svg class="ab" style="left:92px;top:1047px;" width="17" height="15" viewBox="-0.5000 -0.5000 17.0000 15.0000"  preserveAspectRatio="none"><path d="M.2 2.200 H14.600 M.2 6.600 H14.600 M.2 10.950 H14.600" stroke="#8e8e8e" stroke-width="3.100"/></svg>
<div class="ab t " style="left:113px;top:1047px;font-size:15px;color:#9c9c9c;letter-spacing:-.12px">Todos los Objetos</div>
<svg class="ab" style="left:242px;top:1049px;" width="13" height="13" viewBox="0.0000 0.0000 13.0000 13.0000"  preserveAspectRatio="none"><path d="M1.400 1.400 L10.600 10.600 M10.600 1.400 L1.400 10.600" stroke="#8a8a8a" stroke-width="3.200" stroke-linecap="butt"/></svg>
<div class="ab " style="left:268.5px;top:1035px;width:137.7px;height:45px;background:#fff"></div>
<div class="ab " style="left:268.5px;top:1075px;width:137.7px;height:5px;background:#00a9e8"></div>
<svg class="ab" style="left:280px;top:1047px;" width="17" height="15" viewBox="0.0000 -0.5000 17.0000 15.0000"  preserveAspectRatio="none"><path d="M1 1 H6 L7.500 2.800 H14.500 V12 H1Z" fill="none" stroke="#666" stroke-width="1.300" stroke-linejoin="round"/></svg>
<div class="ab t " style="left:301.3px;top:1047px;font-size:15px;color:#666;letter-spacing:-.37px">Restaurant</div>
<svg class="ab" style="left:382px;top:1049px;" width="14" height="13" viewBox="-0.2000 0.0000 14.0000 13.0000"  preserveAspectRatio="none"><path d="M1.400 1.400 L10.600 10.600 M10.600 1.400 L1.400 10.600" stroke="#555" stroke-width="3.200" stroke-linecap="butt"/></svg>
</div>
</body></html>
